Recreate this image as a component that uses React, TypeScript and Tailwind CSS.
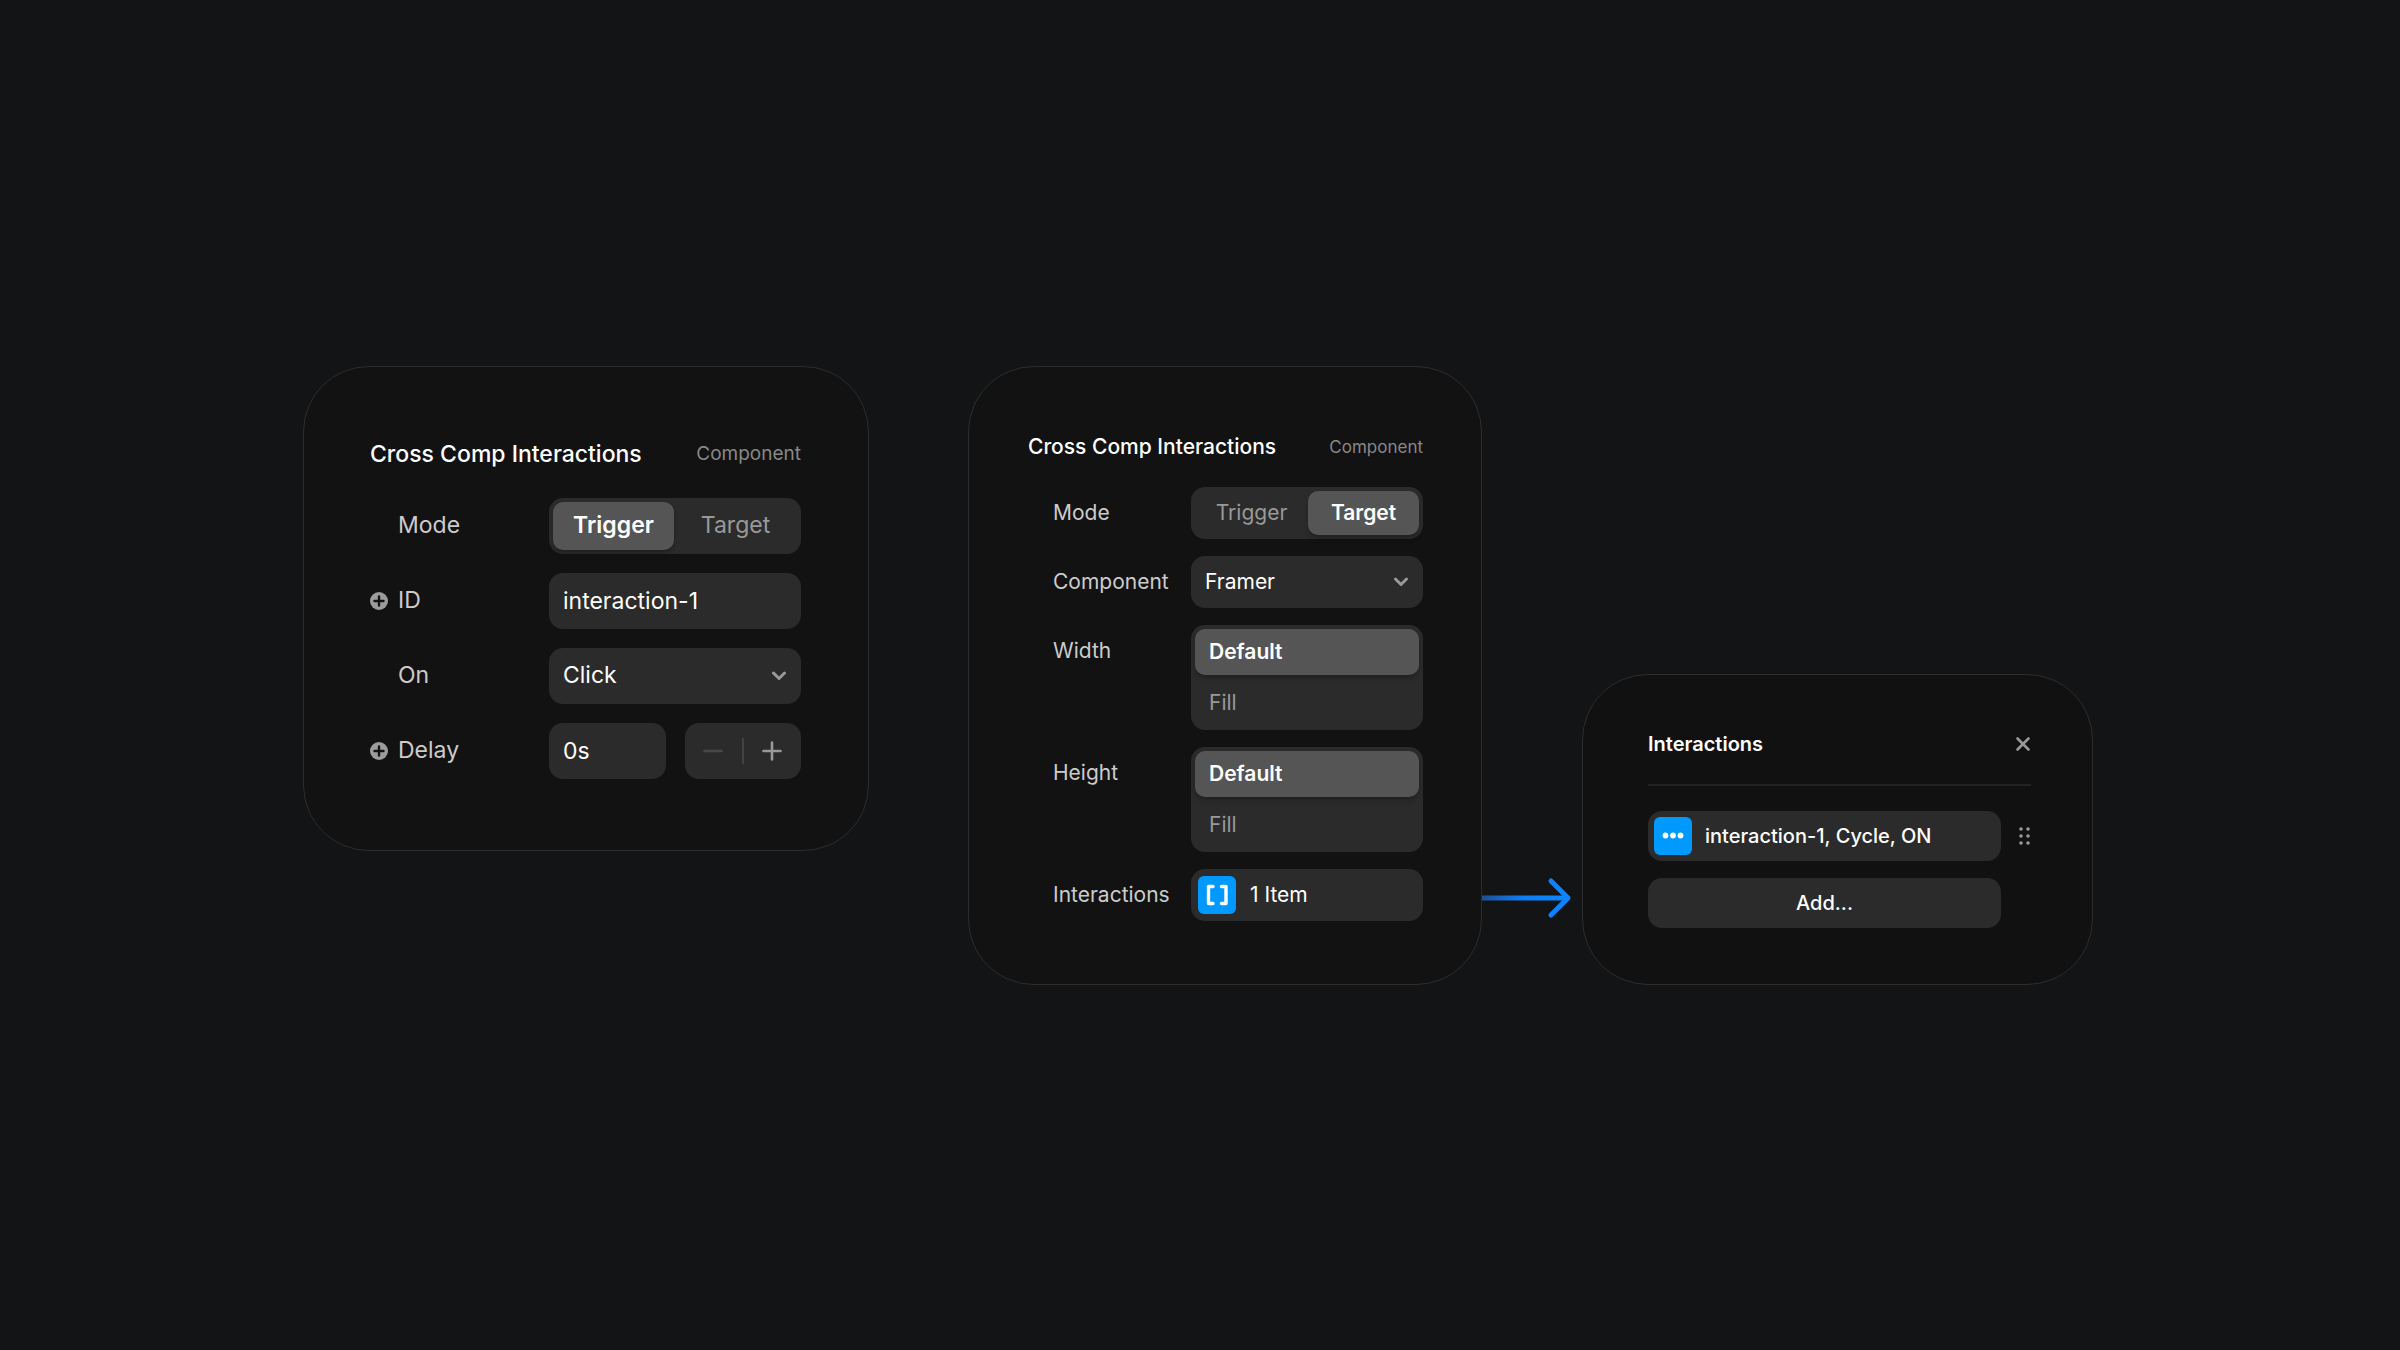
import { ReactNode, useState } from 'react';
import clsx from 'clsx';

type Size = 'md' | 'sm';

interface RowProps {
  size: Size;
  label: string;
  htmlFor?: string;
  addable?: boolean;
  children: ReactNode;
}

interface OptionGroupProps {
  size: Size;
  name: string;
  options: string[];
  initial: string;
  vertical?: boolean;
}

interface DropdownProps {
  id: string;
  size: Size;
  options: string[];
}

const field = 'w-full rounded-[14px] bg-[#2b2b2b] text-white outline-none';

const PlusBadge = () => (
  <svg viewBox="0 0 18 18" className="size-[18px]" aria-hidden="true">
    <circle cx="9" cy="9" r="9" fill="#9c9c9c" />
    <path d="M9 4.5v9M4.5 9h9" stroke="#121212" strokeWidth="2.4" strokeLinecap="round" />
  </svg>
);

const Chevron = () => (
  <svg viewBox="0 0 16 10" className="h-[10px] w-4" fill="none" aria-hidden="true">
    <path d="M2.5 2 8 7.5 13.5 2" stroke="#999999" strokeWidth="3" strokeLinecap="round" strokeLinejoin="round" />
  </svg>
);

const Row = ({ size, label, htmlFor, addable, children }: RowProps) => (
  <div className={clsx('grid items-start', size === 'md' ? 'grid-cols-[28px_151px_1fr]' : 'grid-cols-[25px_138px_1fr]')}>
    <span className={clsx('flex items-center', size === 'md' ? 'h-14' : 'h-[52px]')}>
      {addable && (
        <button type="button" aria-label={`Add variable for ${label}`}>
          <PlusBadge />
        </button>
      )}
    </span>
    <label htmlFor={htmlFor} className={clsx('flex items-center text-[#cccccc]', size === 'md' ? 'h-14' : 'h-[52px]')}>
      {label}
    </label>
    {children}
  </div>
);

const OptionGroup = ({ size, name, options, initial, vertical }: OptionGroupProps) => {
  const [value, setValue] = useState(initial);

  return (
    <div
      role="radiogroup"
      aria-label={name}
      className={clsx(
        'grid rounded-[14px] bg-[#2b2b2b] p-1',
        vertical ? 'gap-[5px]' : size === 'md' ? 'grid-cols-[121fr_123fr]' : 'grid-cols-[113fr_111fr]'
      )}
    >
      {options.map((option) => (
        <label
          key={option}
          className={clsx(
            'relative flex cursor-pointer items-center rounded-[10px]',
            size === 'md' ? 'h-12' : vertical ? 'h-[46px]' : 'h-11',
            vertical ? 'px-[14px]' : 'justify-center',
            value === option ? 'bg-[#555555] font-semibold text-white shadow-md shadow-black/20' : 'text-[#999999]'
          )}
        >
          <input
            type="radio"
            name={name}
            checked={value === option}
            onChange={() => setValue(option)}
            className="sr-only"
          />
          {option}
        </label>
      ))}
    </div>
  );
};

const Dropdown = ({ id, size, options }: DropdownProps) => (
  <div className="relative">
    <select id={id} className={clsx(field, 'appearance-none', size === 'md' ? 'h-14 px-[14px]' : 'h-[52px] px-[14px]')}>
      {options.map((option) => (
        <option key={option}>{option}</option>
      ))}
    </select>
    <span className="pointer-events-none absolute inset-y-0 right-[14px] flex items-center">
      <Chevron />
    </span>
  </div>
);

const TriggerPanel = () => (
  <section className="w-full max-w-[566px] self-start rounded-[66px] border border-[#2d2d2d] bg-[#121212] pt-[73px] pr-[67px] pb-[71px] pl-[66px] text-[23px]">
    <header className="mb-[30px] flex items-center justify-between leading-7">
      <h2 className="font-medium text-white">Cross Comp Interactions</h2>
      <span className="text-[19px] text-[#888888]">Component</span>
    </header>
    <div className="flex flex-col gap-[19px]">
      <Row size="md" label="Mode">
        <OptionGroup size="md" name="Trigger mode" options={['Trigger', 'Target']} initial="Trigger" />
      </Row>
      <Row size="md" label="ID" htmlFor="interaction-id" addable>
        <input id="interaction-id" type="text" defaultValue="interaction-1" className={clsx(field, 'h-14 px-[14px]')} />
      </Row>
      <Row size="md" label="On" htmlFor="event">
        <Dropdown id="event" size="md" options={['Click', 'Hover']} />
      </Row>
      <Row size="md" label="Delay" htmlFor="delay" addable>
        <div className="grid grid-cols-2 gap-[19px]">
          <input id="delay" type="text" defaultValue="0s" className={clsx(field, 'h-14 px-[14px]')} />
          <div className="flex h-14 items-center rounded-[14px] bg-[#2b2b2b]">
            <button type="button" aria-label="Decrease" className="flex flex-1 justify-center">
              <svg viewBox="0 0 20 20" className="size-5">
                <path d="M1.5 10h17" stroke="#484848" strokeWidth="2.6" strokeLinecap="round" />
              </svg>
            </button>
            <span className="h-[26px] w-[2px] bg-[#434343]" />
            <button type="button" aria-label="Increase" className="flex flex-1 justify-center">
              <svg viewBox="0 0 20 20" className="size-5">
                <path d="M10 1.5v17M1.5 10h17" stroke="#999999" strokeWidth="2.6" strokeLinecap="round" />
              </svg>
            </button>
          </div>
        </div>
      </Row>
    </div>
  </section>
);

const TargetPanel = () => (
  <section className="w-full max-w-[514px] rounded-[66px] border border-[#2d2d2d] bg-[#121212] pt-[66px] pr-[58px] pb-[63px] pl-[59px] text-[21px]">
    <header className="mb-[26px] flex items-center justify-between leading-7">
      <h2 className="font-medium text-white">Cross Comp Interactions</h2>
      <span className="text-[17px] text-[#888888]">Component</span>
    </header>
    <div className="flex flex-col gap-[17px]">
      <Row size="sm" label="Mode">
        <OptionGroup size="sm" name="Target mode" options={['Trigger', 'Target']} initial="Target" />
      </Row>
      <Row size="sm" label="Component" htmlFor="component">
        <Dropdown id="component" size="sm" options={['Framer']} />
      </Row>
      <Row size="sm" label="Width">
        <OptionGroup size="sm" name="Width" options={['Default', 'Fill']} initial="Default" vertical />
      </Row>
      <Row size="sm" label="Height">
        <OptionGroup size="sm" name="Height" options={['Default', 'Fill']} initial="Default" vertical />
      </Row>
      <Row size="sm" label="Interactions" htmlFor="items">
        <button id="items" type="button" className={clsx(field, 'flex h-[52px] items-center gap-[14px] px-[7px]')}>
          <svg viewBox="0 0 38 38" className="size-[38px]" fill="none" aria-hidden="true">
            <rect width="38" height="38" rx="6" fill="#0099ff" />
            <path d="M15 10.5h-4.5v17H15M23.5 10.5H28v17h-4.5" stroke="#ffffff" strokeWidth="3.4" strokeLinecap="round" strokeLinejoin="round" />
          </svg>
          1 Item
        </button>
      </Row>
    </div>
  </section>
);

const InteractionsPanel = () => (
  <section className="w-full max-w-[511px] self-end rounded-[66px] border border-[#2d2d2d] bg-[#111111] pt-[55px] pr-[61px] pb-[56px] pl-[65px] text-[20px] text-white">
    <header className="mb-[25px] flex items-center justify-between border-b-2 border-[#222222] pb-[26px] leading-7">
      <h2 className="font-semibold">Interactions</h2>
      <button type="button" aria-label="Close">
        <svg viewBox="0 0 16 16" className="size-4">
          <path d="m2.5 2.5 11 11M13.5 2.5l-11 11" stroke="#999999" strokeWidth="2.6" strokeLinecap="round" />
        </svg>
      </button>
    </header>
    <div className="grid grid-cols-[1fr_30px] gap-y-[17px]">
      <button type="button" className={clsx(field, 'flex h-[50px] items-center gap-[13px] px-[6px] font-medium')}>
        <svg viewBox="0 0 38 38" className="size-[38px]" fill="#ffffff" aria-hidden="true">
          <rect width="38" height="38" rx="6" fill="#0099ff" />
          <circle cx="11.5" cy="18.5" r="2.9" />
          <circle cx="19" cy="18.5" r="2.9" />
          <circle cx="26.5" cy="18.5" r="2.9" />
        </svg>
        interaction-1, Cycle, ON
      </button>
      <button type="button" aria-label="Reorder" className="flex items-center justify-end">
        <svg viewBox="0 0 12 18" className="h-[18px] w-3" fill="#999999">
          {[2, 9, 16].map((y) => (
            <g key={y}>
              <circle cx="2" cy={y} r="1.8" />
              <circle cx="9" cy={y} r="1.8" />
            </g>
          ))}
        </svg>
      </button>
      <button type="button" className={clsx(field, 'h-[50px] font-medium')}>
        Add...
      </button>
    </div>
  </section>
);

const Arrow = () => (
  <div className="w-[100px] shrink-0 self-end pb-[66px]">
    <svg viewBox="0 0 100 42" className="h-[42px] w-full" fill="none" aria-hidden="true">
      <defs>
        <linearGradient id="shaft" x1="0" y1="0" x2="86" y2="0" gradientUnits="userSpaceOnUse">
          <stop offset="0" stopColor="#1f4f96" />
          <stop offset="0.5" stopColor="#0d7ff5" />
          <stop offset="1" stopColor="#0d83ff" />
        </linearGradient>
      </defs>
      <path d="M0 21h86" stroke="url(#shaft)" strokeWidth="5" />
      <path d="m69 4 17 17-17 17" stroke="#0d83ff" strokeWidth="5" strokeLinecap="round" strokeLinejoin="round" />
    </svg>
  </div>
);

const App = () => {
  return (
    <main className="flex min-h-screen items-center justify-center bg-[#131416] pr-1 font-['Inter',sans-serif]">
      <div className="flex w-full justify-center">
        <TriggerPanel />
        <div className="w-[99px] shrink-0" />
        <TargetPanel />
        <Arrow />
        <InteractionsPanel />
      </div>
    </main>
  );
};

export default App;
